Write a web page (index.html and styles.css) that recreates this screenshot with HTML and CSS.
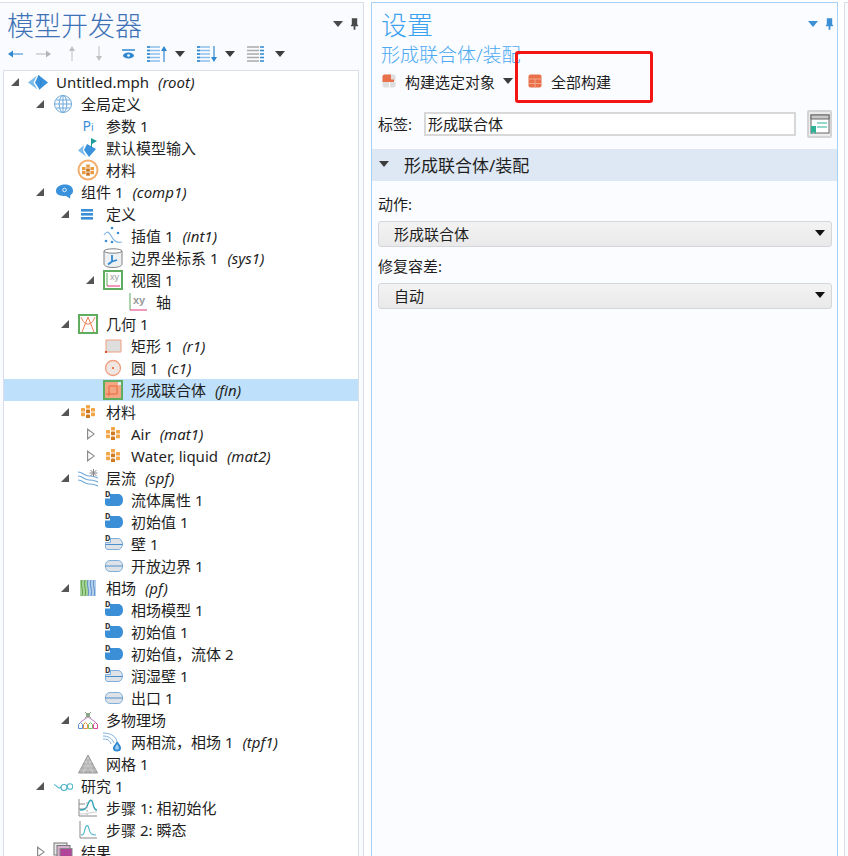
FILE: index.html
```
<!DOCTYPE html>
<html lang="zh">
<head>
<meta charset="utf-8">
<title>模型开发器</title>
<link rel="stylesheet" href="styles.css">
</head>
<body>
<svg class="defs" width="0" height="0" aria-hidden="true">
  <defs>
    <symbol id="i-root" viewBox="0 0 20 20"><path d="M10.500 3L20 10.500l-8.500 7-4.500-7z" fill="#3a92dc"/><path d="M9 3.500L0 10.500l9.500 7-4-7z" fill="#7cbcec"/><path d="M10.500 3l2.500 7.500-1.500 7" fill="none" stroke="#2a7cc4" stroke-width=".6"/></symbol>
    <symbol id="i-globe" viewBox="0 0 20 20"><g fill="none" stroke="#6ea9dc"><circle cx="10" cy="10" r="8.500"/><ellipse cx="10" cy="10" rx="3.800" ry="8.500"/><path d="M1.500 10h17M3 6h14M3 14h14M10 1.500v17"/></g></symbol>
    <symbol id="i-input" viewBox="0 0 22 22"><path d="M10 7l9 5-7 8-5-7z" fill="#3a92dc"/><path d="M7 8l-6 5.500 8 6-3-6z" fill="#7cbcec"/><path d="M14 1l6 3-5 3v3h-1z" fill="#1e9c9c"/></symbol>
    <symbol id="i-matring" viewBox="0 0 22 22"><circle cx="11" cy="11" r="9.500" fill="#fff" stroke="#f4b070" stroke-width="2"/><g fill="#ea9a42"><rect x="5" y="8" width="3.600" height="3.200"/><rect x="9.200" y="5.500" width="3.600" height="3.200"/><rect x="13.400" y="8" width="3.600" height="3.200"/><rect x="5" y="12" width="3.600" height="3.200"/><rect x="13.400" y="12" width="3.600" height="3.200"/></g><g fill="#c87520"><rect x="9.200" y="9.500" width="3.600" height="3.200"/><rect x="9.200" y="13.500" width="3.600" height="3.200"/></g></symbol>
    <symbol id="i-comp" viewBox="0 0 20 20"><path d="M3 9c0-4 4-6.500 9-6.500s8 2.500 8 6.500c0 2-1 3-2.500 4l-.5 3.500-4-2.500C7 14 3 13 3 9z" fill="#3a92dc"/><circle cx="11.500" cy="8" r="1.800" fill="none" stroke="#dcefff"/></symbol>
    <symbol id="i-def" viewBox="0 0 20 20"><g fill="#3a8fd6"><rect x="3" y="5" width="12" height="2.600"/><rect x="3" y="9" width="12" height="2.600"/><rect x="3" y="13" width="12" height="2.600"/></g></symbol>
    <symbol id="i-interp" viewBox="0 0 20 20"><path d="M1 9c2-3 4-4 6-1s4 10 12 8" fill="none" stroke="#7fb5e2" stroke-width="1.200"/><g fill="#3a8fd6"><circle cx="3" cy="15" r="1.300"/><circle cx="9" cy="2" r="1.300"/><circle cx="15" cy="7" r="1.300"/><circle cx="9" cy="16" r="1.300"/></g></symbol>
    <symbol id="i-bcs" viewBox="0 0 20 20"><path d="M1 3v13c0 2.200 4 3.500 9 3.500s9-1.300 9-3.500V3" fill="#eef1f4" stroke="#808080"/><ellipse cx="10" cy="3" rx="9" ry="2.200" fill="#fff" stroke="#808080"/><path d="M9 7v6.500M9 13.500l-4 3M9 13.500l5-1.500" stroke="#2f87d0" stroke-width="1.800" fill="none"/></symbol>
    <symbol id="i-view" viewBox="0 0 20 20"><rect x="1" y="1" width="18" height="18" fill="#fff" stroke="#5fae5f" stroke-width="2"/><path d="M4 3v13" stroke="#5aa85a"/><path d="M4 16h13" stroke="#e0307a"/><text x="7" y="10" class="svg-xy">xy</text></symbol>
    <symbol id="i-axis" viewBox="0 0 20 20"><path d="M2 1v17" stroke="#5aa85a"/><path d="M2 18h17" stroke="#e0307a"/><text x="5" y="12" class="svg-xy-b">xy</text></symbol>
    <symbol id="i-geom" viewBox="0 0 20 20"><rect x="1" y="1" width="18" height="18" fill="#fff" stroke="#5fae5f" stroke-width="2"/><path d="M4 18L10 3l6 15M3 3c2 5 4 7 7 7s5-2 7-7" fill="none" stroke="#ee7a50"/></symbol>
    <symbol id="i-rect" viewBox="0 0 20 20"><rect x="3" y="4" width="15" height="12" fill="#dedede"/><path d="M3 16V4h15v12z" fill="none" stroke="#f2a080"/><rect x="2" y="15" width="2" height="2" fill="#e0502a"/></symbol>
    <symbol id="i-circle" viewBox="0 0 20 20"><circle cx="10" cy="10" r="7.500" fill="#efe6e2" stroke="#f0a080" stroke-width="1.300"/><circle cx="10" cy="10" r="1" fill="#e0502a"/></symbol>
    <symbol id="i-fin" viewBox="0 0 20 20"><rect x="1" y="1" width="18" height="18" fill="#f3a683" stroke="#5fae5f" stroke-width="2"/><path d="M3 14h11V6H6v10" stroke="#e8673a" fill="none"/><path d="M15 2h3v3h-3z" fill="#dff0fb"/></symbol>
    <symbol id="i-mat" viewBox="0 0 20 20"><g fill="#f2a648"><rect x="3" y="6" width="4" height="3.600" rx=".6"/><rect x="8" y="3" width="4" height="3.600" rx=".6"/><rect x="13" y="6" width="4" height="3.600" rx=".6"/><rect x="3" y="10.600" width="4" height="3.600" rx=".6"/><rect x="13" y="10.600" width="4" height="3.600" rx=".6"/></g><g fill="#cf7a20"><rect x="8" y="7.600" width="4" height="3.600" rx=".6"/><rect x="8" y="12.400" width="4" height="3.600" rx=".6"/></g></symbol>
    <symbol id="i-flow" viewBox="0 0 20 20"><g fill="none" stroke="#6ea9dc" stroke-width="1.100"><path d="M0 4c5 0 6 4 11 4s6 1 9 2"/><path d="M0 8c5 0 6 4 11 4s6 1 9 2"/><path d="M0 12c5 0 6 4 11 4s6 1 9 2"/></g><path d="M15.500 1v8M11.500 5h8M12.500 2l6 6M18.500 2l-6 6" stroke="#888"/></symbol>
    <symbol id="i-dblue" viewBox="0 0 20 20"><path d="M2 8.500h5V4h8c3 0 5 2.500 5 6s-2 6-5 6H5c-2 0-3-1-3-3z" fill="#3a8fd6"/><text x="2" y="7" class="svg-d">D</text></symbol>
    <symbol id="i-dwall" viewBox="0 0 20 20"><path d="M2.500 8.500h5V4.500H15c2.500 0 4.500 2.500 4.500 5.500S17.500 15.500 15 15.500H5c-1.500 0-2.500-1-2.500-2.500z" fill="#dfe2e6" stroke="#7fb0dc"/><path d="M2.500 10.500h17" stroke="#4a90d0"/><text x="2" y="7" class="svg-d">D</text></symbol>
    <symbol id="i-pill" viewBox="0 0 20 20"><rect x="2.500" y="4.500" width="17" height="11" rx="4.500" fill="#dfe2e6" stroke="#7fb0dc"/><path d="M2.500 10h17" stroke="#4a90d0"/></symbol>
    <symbol id="i-phase" viewBox="0 0 20 20"><rect x="2" y="2" width="8" height="16" fill="#a8d49a"/><rect x="10" y="2" width="8" height="16" fill="#b4d0ec"/><g fill="none" stroke="#5aa04a"><path d="M4 2c-2 5 2 10 0 16M7 2c-2 5 2 10 0 16"/></g><g fill="none" stroke="#5a90c8"><path d="M10 2c-2 5 2 10 0 16M13 2c-2 5 2 10 0 16M16 2c-2 5 2 10 0 16"/></g></symbol>
    <symbol id="i-multi" viewBox="0 0 20 20"><circle cx="10" cy="5" r="2" fill="#5aa85a"/><path d="M7 2l6 6M13 2l-6 6" stroke="#999"/><g fill="#fff" stroke-width="1"><path d="M.5 18.500v-4l2-2 2 2v4z" stroke="#5a90d0"/><path d="M5.500 18.500v-4l2-2 2 2v4z" stroke="#e09040"/><path d="M10.500 18.500v-4l2-2 2 2v4z" stroke="#7ac060"/><path d="M15.500 18.500v-4l2-2 2 2v4z" stroke="#e040a0"/></g><path d="M2.500 12l7.500-5 7.500 5" fill="none" stroke="#c080c0"/></symbol>
    <symbol id="i-two" viewBox="0 0 20 20"><g fill="none" stroke="#7fb0dc"><path d="M0 1c6 0 12 2 14 8"/><path d="M0 4c5 0 9 2 11 7"/><path d="M0 7c4 0 7 1 8 5"/></g><path d="M14 9c3 4 4 5 4 7a4 3.500 0 0 1-8 0c0-2 2-3 4-7z" fill="#2f87d0"/><path d="M14 12c1.500 2 2 3 2 4a2 1.800 0 0 1-4 0c0-1 1-2 2-4z" fill="#9ccbf0"/></symbol>
    <symbol id="i-mesh" viewBox="0 0 20 20"><path d="M10 1l9.500 18H.5z" fill="#b0b0b0" stroke="#999"/><g stroke="#dcdcdc" stroke-width=".5"><path d="M6 8h8M4 12h12M2 16h16M10 3L5 19M10 3l5 16M7 7l8 12M13 7L5 19"/></g></symbol>
    <symbol id="i-study" viewBox="0 0 20 20"><g fill="none" stroke="#4db3c9" stroke-width="1.100"><circle cx="11" cy="11.500" r="3"/><circle cx="17" cy="10.500" r="2.800"/><path d="M8 11C5 14 4 9 1 8.500"/></g></symbol>
    <symbol id="i-step1" viewBox="0 0 20 20"><path d="M1 1v17h18M1 6h6M1 11h6" fill="none" stroke="#888"/><path d="M2 12c5 0 6-1 8-6s4-5 5 0 2 6 4 6" fill="none" stroke="#36a5b5" stroke-width="1.400"/><path d="M2 16c8 0 12-2 17-2" fill="none" stroke="#ccc"/><path d="M9 4v13" stroke="#aaa" stroke-dasharray="2"/></symbol>
    <symbol id="i-step2" viewBox="0 0 20 20"><path d="M2 1v17h17" fill="none" stroke="#888"/><path d="M3 15c3 0 3-2 4-6s3-5 4 0 3 6 7 6" fill="none" stroke="#4db3c9" stroke-width="1.100"/></symbol>
    <symbol id="i-res" viewBox="0 0 20 20"><rect x="1" y="1" width="13" height="12" fill="#e8e8e8" stroke="#777"/><rect x="4" y="3.500" width="13" height="12" fill="#d8b0d0" stroke="#777"/><rect x="7" y="6.500" width="12" height="11" fill="#b0459a" stroke="#888"/></symbol>
    <symbol id="i-build-one" viewBox="0 0 16 16"><rect x="1.500" y="1.500" width="13" height="13" rx="2" fill="#dedede"/><path d="M1.500 8.500h13M8.500 1.500v13" stroke="#fff"/><path d="M3.500 1.500H10v5h3V9H1.500V3.500a2 2 0 0 1 2-2z" fill="#e8704a"/></symbol>
    <symbol id="i-build-all" viewBox="0 0 16 16"><rect x="1.500" y="1.500" width="13" height="13" rx="2" fill="#e8704a"/><path d="M1.500 6h13M1.500 10.500h13M8 6v8.500" stroke="#f4a88a"/></symbol>
  </defs>
</svg>

<main class="app">
  <section class="panel panel-tree">
    <header class="head">
      <h1 class="title">模型开发器</h1>
      <div class="pin-tools">
        <svg class="dropdown" viewBox="0 0 10 6"><path d="M0 0h10L5 6z"/></svg>
        <svg class="pin" viewBox="0 0 10 13"><path d="M2 0h6v7l1 1v1H6v4H4V9H1V8l1-1z"/></svg>
      </div>
    </header>
    <div class="tree-tools">
      <svg class="tool" viewBox="0 0 15 10"><path d="M1 5h14" stroke="#2f87d0"/><path d="M0 5l5-3.500v7z" fill="#2f87d0"/></svg>
      <svg class="tool" viewBox="0 0 15 10"><path d="M0 5h14" stroke="#b5b5b5"/><path d="M15 5l-5-3.500v7z" fill="#b5b5b5"/></svg>
      <svg class="tool tool-v" viewBox="0 0 10 15"><path d="M5 15V2" stroke="#c0c0c0"/><path d="M5 0L2 5h6z" fill="#c0c0c0"/></svg>
      <svg class="tool tool-v" viewBox="0 0 10 15"><path d="M5 0v13" stroke="#c0c0c0"/><path d="M5 15l-3-5h6z" fill="#c0c0c0"/></svg>
      <svg class="tool tool-eye" viewBox="0 0 13 10"><path d="M0 1h13" stroke="#2f87d0" stroke-width="1.500"/><ellipse cx="6.500" cy="6.500" rx="5.500" ry="3" fill="#2f87d0"/><circle cx="6.500" cy="6.500" r="1.300" fill="#fff"/></svg>
      <span class="tool-group">
        <svg class="tool-list" viewBox="0 0 20 16"><path d="M0 1h13M0 4.500h13M0 8h13M0 11.500h13M0 15h13" stroke="#8cc0ea" stroke-width="1.300"/><path d="M0 1h3M0 4.500h3M0 8h3M0 11.500h3M0 15h3" stroke="#2f87d0" stroke-width="1.300"/><path d="M17 16V3" stroke="#2f87d0" stroke-width="1.200"/><path d="M17 0l-3 5h6z" fill="#2f87d0"/></svg>
        <svg class="dropdown dark" viewBox="0 0 10 6"><path d="M0 0h10L5 6z"/></svg>
      </span>
      <span class="tool-group">
        <svg class="tool-list" viewBox="0 0 20 16"><path d="M0 1h13M0 4.500h13M0 8h13M0 11.500h13M0 15h13" stroke="#8cc0ea" stroke-width="1.300"/><path d="M0 1h3M0 4.500h3M0 8h3M0 11.500h3M0 15h3" stroke="#2f87d0" stroke-width="1.300"/><path d="M17 0v13" stroke="#2f87d0" stroke-width="1.200"/><path d="M17 16l-3-5h6z" fill="#2f87d0"/></svg>
        <svg class="dropdown dark" viewBox="0 0 10 6"><path d="M0 0h10L5 6z"/></svg>
      </span>
      <span class="tool-group">
        <svg class="tool-list" viewBox="0 0 20 16"><path d="M0 1h12M0 4.500h12M0 8h12M0 11.500h12M0 15h12" stroke="#aaa" stroke-width="1.300"/><path d="M13 1h4M13 4.500h4M13 8h4M13 11.500h4M13 15h4" stroke="#2f87d0" stroke-width="1.300"/></svg>
        <svg class="dropdown dark" viewBox="0 0 10 6"><path d="M0 0h10L5 6z"/></svg>
      </span>
    </div>

    <ul class="tree">
      <li class="row l0"><span class="arrow open"></span><svg class="icon"><use href="#i-root"/></svg><span class="name">Untitled.mph</span><em class="tag">(root)</em></li>
      <li class="row l1"><span class="arrow open"></span><svg class="icon"><use href="#i-globe"/></svg><span class="name">全局定义</span></li>
      <li class="row l2"><span class="arrow"></span><span class="icon icon-pi">P<small>i</small></span><span class="name">参数 1</span></li>
      <li class="row l2"><span class="arrow"></span><svg class="icon icon-big"><use href="#i-input"/></svg><span class="name">默认模型输入</span></li>
      <li class="row l2"><span class="arrow"></span><svg class="icon icon-big"><use href="#i-matring"/></svg><span class="name">材料</span></li>
      <li class="row l1"><span class="arrow open"></span><svg class="icon"><use href="#i-comp"/></svg><span class="name">组件 1</span><em class="tag">(comp1)</em></li>
      <li class="row l2"><span class="arrow open"></span><svg class="icon"><use href="#i-def"/></svg><span class="name">定义</span></li>
      <li class="row l3"><span class="arrow"></span><svg class="icon"><use href="#i-interp"/></svg><span class="name">插值 1</span><em class="tag">(int1)</em></li>
      <li class="row l3"><span class="arrow"></span><svg class="icon"><use href="#i-bcs"/></svg><span class="name">边界坐标系 1</span><em class="tag">(sys1)</em></li>
      <li class="row l3"><span class="arrow open"></span><svg class="icon"><use href="#i-view"/></svg><span class="name">视图 1</span></li>
      <li class="row l4"><span class="arrow"></span><svg class="icon"><use href="#i-axis"/></svg><span class="name">轴</span></li>
      <li class="row l2"><span class="arrow open"></span><svg class="icon"><use href="#i-geom"/></svg><span class="name">几何 1</span></li>
      <li class="row l3"><span class="arrow"></span><svg class="icon"><use href="#i-rect"/></svg><span class="name">矩形 1</span><em class="tag">(r1)</em></li>
      <li class="row l3"><span class="arrow"></span><svg class="icon"><use href="#i-circle"/></svg><span class="name">圆 1</span><em class="tag">(c1)</em></li>
      <li class="row l3 selected"><span class="arrow"></span><svg class="icon"><use href="#i-fin"/></svg><span class="name">形成联合体</span><em class="tag">(fin)</em></li>
      <li class="row l2"><span class="arrow open"></span><svg class="icon"><use href="#i-mat"/></svg><span class="name">材料</span></li>
      <li class="row l3"><span class="arrow closed"></span><svg class="icon"><use href="#i-mat"/></svg><span class="name">Air</span><em class="tag">(mat1)</em></li>
      <li class="row l3"><span class="arrow closed"></span><svg class="icon"><use href="#i-mat"/></svg><span class="name">Water, liquid</span><em class="tag">(mat2)</em></li>
      <li class="row l2"><span class="arrow open"></span><svg class="icon"><use href="#i-flow"/></svg><span class="name">层流</span><em class="tag">(spf)</em></li>
      <li class="row l3"><span class="arrow"></span><svg class="icon"><use href="#i-dblue"/></svg><span class="name">流体属性 1</span></li>
      <li class="row l3"><span class="arrow"></span><svg class="icon"><use href="#i-dblue"/></svg><span class="name">初始值 1</span></li>
      <li class="row l3"><span class="arrow"></span><svg class="icon"><use href="#i-dwall"/></svg><span class="name">壁 1</span></li>
      <li class="row l3"><span class="arrow"></span><svg class="icon"><use href="#i-pill"/></svg><span class="name">开放边界 1</span></li>
      <li class="row l2"><span class="arrow open"></span><svg class="icon"><use href="#i-phase"/></svg><span class="name">相场</span><em class="tag">(pf)</em></li>
      <li class="row l3"><span class="arrow"></span><svg class="icon"><use href="#i-dblue"/></svg><span class="name">相场模型 1</span></li>
      <li class="row l3"><span class="arrow"></span><svg class="icon"><use href="#i-dblue"/></svg><span class="name">初始值 1</span></li>
      <li class="row l3"><span class="arrow"></span><svg class="icon"><use href="#i-dblue"/></svg><span class="name">初始值，流体 2</span></li>
      <li class="row l3"><span class="arrow"></span><svg class="icon"><use href="#i-dwall"/></svg><span class="name">润湿壁 1</span></li>
      <li class="row l3"><span class="arrow"></span><svg class="icon"><use href="#i-pill"/></svg><span class="name">出口 1</span></li>
      <li class="row l2"><span class="arrow open"></span><svg class="icon"><use href="#i-multi"/></svg><span class="name">多物理场</span></li>
      <li class="row l3"><span class="arrow"></span><svg class="icon"><use href="#i-two"/></svg><span class="name">两相流，相场 1</span><em class="tag">(tpf1)</em></li>
      <li class="row l2"><span class="arrow"></span><svg class="icon"><use href="#i-mesh"/></svg><span class="name">网格 1</span></li>
      <li class="row l1"><span class="arrow open"></span><svg class="icon"><use href="#i-study"/></svg><span class="name">研究 1</span></li>
      <li class="row l2"><span class="arrow"></span><svg class="icon"><use href="#i-step1"/></svg><span class="name">步骤 1: 相初始化</span></li>
      <li class="row l2"><span class="arrow"></span><svg class="icon"><use href="#i-step2"/></svg><span class="name">步骤 2: 瞬态</span></li>
      <li class="row l1"><span class="arrow closed"></span><svg class="icon"><use href="#i-res"/></svg><span class="name">结果</span></li>
    </ul>
  </section>

  <section class="panel panel-settings">
    <header class="head head-settings">
      <h2 class="title title-settings">设置</h2>
      <div class="pin-tools">
        <svg class="dropdown blue" viewBox="0 0 10 6"><path d="M0 0h10L5 6z"/></svg>
        <svg class="pin blue" viewBox="0 0 10 13"><path d="M2 0h6v7l1 1v1H6v4H4V9H1V8l1-1z"/></svg>
      </div>
    </header>
    <div class="subtitle">形成联合体/装配</div>
    <div class="actions">
      <button class="action"><svg class="action-icon"><use href="#i-build-one"/></svg>构建选定对象<svg class="dropdown dark small" viewBox="0 0 10 6"><path d="M0 0h10L5 6z"/></svg></button>
      <button class="action action-all"><svg class="action-icon"><use href="#i-build-all"/></svg>全部构建</button>
    </div>
    <div class="highlight"></div>
    <div class="label-row">
      <label class="label-text">标签:</label>
      <input class="label-input" value="形成联合体">
      <button class="label-btn">
        <svg viewBox="0 0 20 20" width="20" height="20"><rect x="1" y="1" width="18" height="18" fill="#fff" stroke="#666"/><rect x="1" y="1" width="18" height="4" fill="#c8c8c8" stroke="#666"/><path d="M7 9h10M7 13h10" stroke="#2fb295" stroke-width="1.200"/><path d="M1 12h5v8l-2.500-2L1 20z" fill="#2fb295"/></svg>
      </button>
    </div>
    <div class="section-head"><svg class="dropdown dark" viewBox="0 0 10 6"><path d="M0 0h10L5 6z"/></svg>形成联合体/装配</div>
    <div class="form">
      <div class="field-label">动作:</div>
      <div class="select">形成联合体<svg class="dropdown black" viewBox="0 0 10 6"><path d="M0 0h10L5 6z"/></svg></div>
      <div class="field-label">修复容差:</div>
      <div class="select">自动<svg class="dropdown black" viewBox="0 0 10 6"><path d="M0 0h10L5 6z"/></svg></div>
    </div>
  </section>

  <section class="panel panel-third"></section>
</main>
</body>
</html>
```

FILE: styles.css
```
* { box-sizing: border-box; }
html, body { margin: 0; height: 100%; overflow: hidden; }
body {
  background: #fff;
  color: #1f1f1f;
  font-family: "Noto Sans", "Noto Sans CJK SC", sans-serif;
  font-size: 15px;
}
.defs { position: absolute; }
.app {
  display: flex;
  height: 856px;
  padding-top: 2px;
}
.panel {
  height: 854px;
  background: #f9fbff;
  border: 1px solid #d9dfe8;
  border-bottom: 0;
  flex: none;
  overflow: hidden;
}
.panel-tree { width: 365px; margin-left: -1px; }
.panel-settings {
  width: 467px;
  margin-left: 7px;
  position: relative;
  background: #fbfcff;
  border-color: #a6d1f7;
}
.panel-third { width: 20px; margin-left: 6px; background: #fbfcff; }

.head {
  display: flex;
  align-items: center;
  justify-content: space-between;
  height: 37px;
  padding: 0 4px 0 7px;
}
.title {
  margin: 8px 0 0;
  font-size: 27px;
  font-weight: 300;
  line-height: 37px;
  color: #3f72b5;
}
.title-settings {
  font-size: 26px;
  color: #3ba2f0;
}
.head-settings { padding: 0 3px 0 9px; }
.pin-tools { display: flex; align-items: center; gap: 7px; margin-top: 4px; }
.dropdown { width: 10px; height: 6px; fill: #4a4a4a; flex: none; }
.dropdown.dark { fill: #3c3c3c; }
.dropdown.blue { fill: #3d8fd6; }
.dropdown.black { fill: #111; }
.pin { width: 9px; height: 12px; fill: #4a4a4a; }
.pin.blue { fill: #3d8fd6; }

.tree-tools {
  display: flex;
  align-items: center;
  height: 30px;
  padding: 0 0 3px 8px;
}
.tool { width: 15px; height: 10px; margin-right: 13px; flex: none; }
.tool-v { width: 10px; height: 15px; margin: 0 14px 0 3px; }
.tool-eye { width: 13px; height: 10px; margin: 0 12px 0 4px; }
.tool-group { display: flex; align-items: center; margin-right: 12px; gap: 8px; }
.tool-list { width: 20px; height: 16px; }

.tree {
  list-style: none;
  margin: 0 0 0 3px;
  padding: 0;
  width: 356px;
  height: 840px;
  background: #fff;
  border: 1px solid #d9dfe8;
}
.row {
  display: flex;
  align-items: center;
  height: 22px;
  white-space: nowrap;
  padding-left: 4px;
}
.l1 { padding-left: 29px; }
.l2 { padding-left: 54px; }
.l3 { padding-left: 79px; }
.l4 { padding-left: 104px; }
.selected { background: #bfe0fa; }
.arrow { width: 14px; height: 14px; flex: none; position: relative; }
.arrow.open::before {
  content: "";
  position: absolute;
  left: 3px;
  top: 3px;
  width: 0;
  height: 0;
  border-style: solid;
  border-width: 0 0 8px 8px;
  border-color: transparent transparent #555 transparent;
}
.arrow.closed::before {
  content: "";
  position: absolute;
  left: 4px;
  top: 1px;
  width: 8px;
  height: 12px;
  background: #8a8a8a;
  clip-path: polygon(0 0, 100% 50%, 0 100%, 0 0, 15% 20%, 15% 80%, 80% 50%, 15% 20%);
}
.icon {
  width: 20px;
  height: 20px;
  margin: 0 8px 0 6px;
  flex: none;
}
.icon-big { width: 22px; height: 22px; margin: 0 7px 0 5px; }
.icon-pi {
  display: block;
  color: #3d8fd6;
  font-size: 14px;
  line-height: 20px;
  text-align: center;
}
.icon-pi small { font-size: 10px; }
.name { margin-top: -1px; }
.tag { margin: -1px 0 0 9px; font-style: italic; }

.svg-xy { font: 9px "Liberation Sans", sans-serif; fill: #999; }
.svg-xy-b { font: bold 11px "Liberation Sans", sans-serif; fill: #999; }
.svg-d { font: bold 9px "Liberation Mono", monospace; fill: #333; }

.subtitle {
  font-size: 19px;
  font-weight: 300;
  line-height: 26px;
  color: #4aa9f2;
  padding: 2px 0 0 9px;
  height: 25px;
  white-space: nowrap;
}
.actions { display: flex; align-items: center; height: 30px; padding-left: 9px; margin-top: 2px; }
.action {
  display: flex;
  align-items: center;
  border: 0;
  background: none;
  padding: 0 0 2px;
  font: inherit;
  color: inherit;
}
.action-icon { width: 16px; height: 16px; margin-right: 8px; flex: none; }
.small { margin-left: 8px; }
.action-all { margin-left: 14px; }
.highlight {
  position: absolute;
  left: 143px;
  top: 48px;
  width: 138px;
  height: 52px;
  border: 3px solid #f31414;
  border-radius: 3px;
}
.label-row {
  display: flex;
  align-items: center;
  height: 30px;
  margin-top: 12px;
  padding: 0 5px 0 6px;
}
.label-text { width: 46px; flex: none; margin-top: -2px; }
.label-input {
  flex: 1;
  height: 24px;
  border: 2px solid #d8d8d8;
  padding: 0 2px 2px;
  font: inherit;
  color: inherit;
  background: #fff;
  min-width: 0;
}
.label-btn {
  width: 25px;
  height: 28px;
  margin-left: 11px;
  padding: 0;
  border: 2px solid #d4d4d4;
  border-radius: 2px;
  background: #ececec;
  display: flex;
  align-items: center;
  justify-content: center;
}
.section-head {
  display: flex;
  align-items: center;
  gap: 15px;
  height: 32px;
  margin-top: 10px;
  padding: 0 0 2px 7px;
  background: #dee8f4;
  font-size: 17px;
}
.form { padding: 12px 5px 0 6px; }
.field-label { height: 28px; line-height: 22px; }
.select {
  display: flex;
  align-items: center;
  justify-content: space-between;
  height: 26px;
  padding: 0 6px 2px 15px;
  margin-bottom: 8px;
  border: 1px solid #d4d6da;
  border-radius: 3px;
  background: linear-gradient(#f3f3f3, #e9e9e9);
}
```
